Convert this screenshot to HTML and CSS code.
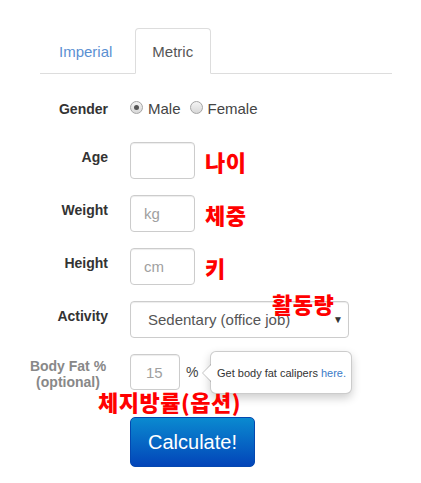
FILE: index.html
```html
<!DOCTYPE html>
<html>
  <head>
    <title>Calorie Calculator</title>
    <link rel="stylesheet" href="styles.css">
  </head>
  <body>
    <div class="calc">
      <ul class="tabs">
        <li><a href="#">Imperial</a></li>
        <li class="active"><a href="#">Metric</a></li>
      </ul>

      <form class="calc-form">
        <div class="row row-gender">
          <label>Gender</label>
          <div class="radios">
            <label class="radio"><input type="radio" name="gender" checked> Male</label>
            <label class="radio"><input type="radio" name="gender"> Female</label>
          </div>
        </div>

        <div class="row">
          <label for="age">Age</label>
          <div class="field">
            <input type="text" id="age" class="box">
            <span class="note">나이</span>
          </div>
        </div>

        <div class="row">
          <label for="weight">Weight</label>
          <div class="field">
            <input type="text" id="weight" class="box" placeholder="kg">
            <span class="note">체중</span>
          </div>
        </div>

        <div class="row">
          <label for="height">Height</label>
          <div class="field">
            <input type="text" id="height" class="box" placeholder="cm">
            <span class="note">키</span>
          </div>
        </div>

        <div class="row">
          <label for="activity">Activity</label>
          <div class="field select-wrap">
            <div class="select" id="activity">
              <span>Sedentary (office job)</span>
              <span class="caret">&#9660;</span>
            </div>
            <span class="note note-activity">활동량</span>
          </div>
        </div>

        <div class="row row-fat">
          <label for="fat" class="muted">Body Fat %<br>(optional)</label>
          <div class="field">
            <input type="text" id="fat" class="box box-small" placeholder="15">
            <span class="unit">%</span>
            <div class="popover">
              Get body fat calipers <a href="#">here.</a>
            </div>
          </div>
          <span class="note note-fat">체지방률(옵션)</span>
        </div>

        <div class="row">
          <span></span>
          <div>
            <button type="submit" class="btn">Calculate!</button>
          </div>
        </div>
      </form>
    </div>
  </body>
</html>
```

FILE: styles.css
```css
body {
  margin: 0;
  font-family: "Liberation Sans", Arial, sans-serif;
  background-color: #fff;
  color: #333;
}

.calc {
  width: 421px;
}

/* tabs */
.tabs {
  list-style: none;
  margin: 28px 29px 0 40px;
  padding: 0;
  display: flex;
  border-bottom: 1px solid #ddd;
}

.tabs li {
  margin-right: 3px;
  margin-bottom: -1px;
}

.tabs a {
  display: block;
  padding: 13px 19px 12px 18px;
  font-size: 15px;
  line-height: 19px;
  color: #5b90d2;
  text-decoration: none;
  border: 1px solid transparent;
  border-radius: 4px 4px 0 0;
}

.tabs .active a {
  color: #555;
  background-color: #fff;
  border-color: #ddd #ddd transparent;
  padding: 13px 17px 12px 16px;
}

/* form rows */
.calc-form {
  margin-top: 18px;
  padding-left: 20px;
}

.row {
  display: grid;
  grid-template-columns: 88px 1fr;
  column-gap: 22px;
  margin-bottom: 16px;
  position: relative;
}

.row > label {
  text-align: right;
  font-weight: bold;
  font-size: 14px;
  line-height: 20px;
  padding-top: 5px;
}

.row-gender {
  margin-bottom: 16px;
  height: 34px;
}

.row-gender > label {
  padding-top: 7px;
}

.radios {
  display: flex;
  align-items: center;
  height: 32px;
  font-size: 15px;
  color: #444;
}

.radio {
  display: flex;
  align-items: center;
  margin-right: 9px;
}

.radio input {
  appearance: none;
  -webkit-appearance: none;
  width: 13px;
  height: 13px;
  margin: 0 5px 0 0;
  border: 1px solid #a5a5a5;
  border-radius: 50%;
  background: linear-gradient(#f4f4f4, #d8d8d8);
  position: relative;
  top: -1px;
}

.radio input:checked::after {
  content: "";
  position: absolute;
  left: 3px;
  top: 3px;
  width: 5px;
  height: 5px;
  border-radius: 50%;
  background-color: #555;
}

.field {
  display: flex;
  align-items: center;
  position: relative;
}

.box {
  width: 65px;
  height: 37px;
  box-sizing: border-box;
  padding: 0 13px;
  font-family: inherit;
  font-size: 15px;
  color: #555;
  border: 1px solid #ccc;
  border-radius: 4px;
  box-shadow: inset 0 1px 1px rgba(0, 0, 0, 0.075);
  outline: none;
}

.box::placeholder {
  color: #a0a0a0;
}

.box-small {
  width: 50px;
  height: 36px;
  padding: 0 15px;
}

.note {
  color: #ff0000;
  font-family: "Noto Sans CJK KR", sans-serif;
  font-weight: 900;
  font-size: 22px;
  line-height: 24px;
  letter-spacing: 0.5px;
  margin-left: 10px;
}

.select {
  width: 219px;
  height: 37px;
  box-sizing: border-box;
  border: 1px solid #ccc;
  border-radius: 4px;
  padding: 0 5px 0 17px;
  display: flex;
  align-items: center;
  justify-content: space-between;
  font-size: 15px;
  color: #555;
  box-shadow: inset 0 1px 1px rgba(0, 0, 0, 0.075);
}

.caret {
  font-size: 10px;
  color: #333;
}

.note-activity {
  position: absolute;
  left: 142px;
  top: -10px;
  margin: 0;
}

.muted {
  color: #888;
}

.row-fat > label {
  text-align: center;
  padding: 4px 0 0 8px;
  line-height: 16px;
}

.unit {
  font-size: 14px;
  color: #444;
  margin-left: 6px;
}

.popover {
  position: absolute;
  left: 80px;
  top: -3px;
  width: 142px;
  height: 43px;
  box-sizing: border-box;
  padding: 15px 0 0 6px;
  font-size: 11px;
  color: #333;
  background-color: #fff;
  border: 1px solid rgba(0, 0, 0, 0.2);
  border-radius: 6px;
  box-shadow: 0 4px 10px rgba(0, 0, 0, 0.2);
  white-space: nowrap;
}

.popover::before {
  content: "";
  position: absolute;
  left: -9px;
  top: 12px;
  border-style: solid;
  border-width: 9px 9px 9px 0;
  border-color: transparent rgba(0, 0, 0, 0.22) transparent transparent;
}

.popover::after {
  content: "";
  position: absolute;
  left: -8px;
  top: 13px;
  border-style: solid;
  border-width: 8px 8px 8px 0;
  border-color: transparent #fff transparent transparent;
}

.popover a {
  color: #3a7bc8;
  text-decoration: none;
}

.note-fat {
  position: absolute;
  left: 78px;
  top: 35px;
  margin: 0;
}

.btn {
  margin-top: 11px;
  width: 125px;
  height: 50px;
  border: 1px solid #0448b0;
  border-radius: 5px;
  background: linear-gradient(#0a8ad0, #0345b9);
  color: #fff;
  font-family: inherit;
  font-size: 20px;
  cursor: pointer;
}
```
